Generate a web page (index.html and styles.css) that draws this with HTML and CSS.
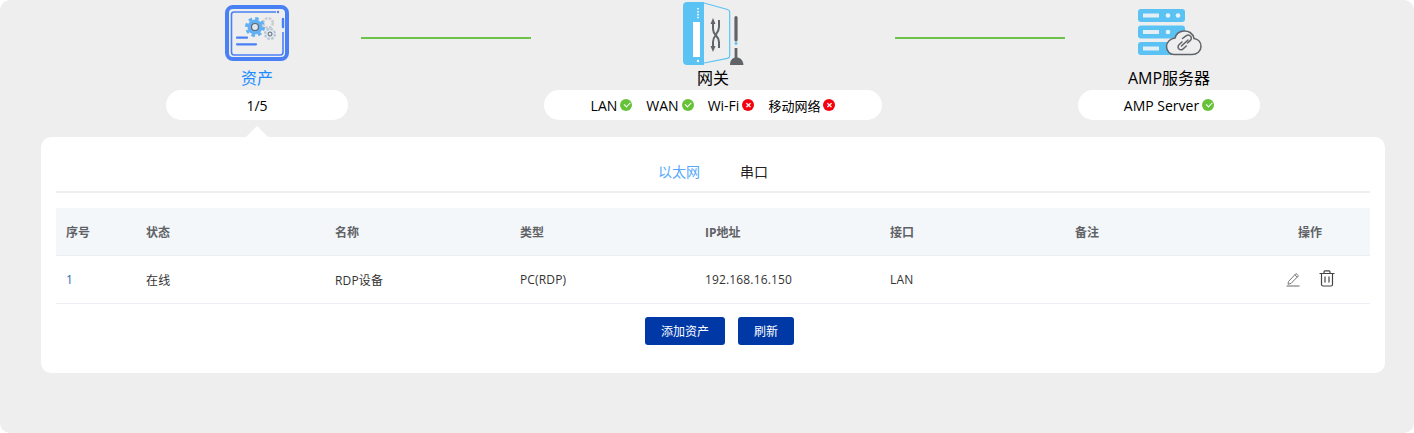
FILE: index.html
```html
<!DOCTYPE html>
<html>
<head>
  <meta charset="UTF-8">
  <meta name="viewport" content="width=device-width, initial-scale=1.0">
  <link rel="stylesheet" href="styles.css">
  <title>资产</title>
</head>
<body>
  <div class="page">
    <div class="topo">
      <div class="node node-asset">
        <svg class="node-icon" width="66" height="66" viewBox="0 0 66 66">
          <rect x="3" y="7" width="60" height="52" rx="6" fill="none" stroke="#4a80f5" stroke-width="4"/>
          <path d="M52 12H10C8.500 12 7.500 13 7.500 14.500V52C7.500 54 8.500 55 10 55H56.500C58 55 59 54 59 52V32" fill="none" stroke="#4a80f5" stroke-width="1.600"/>
          <circle cx="54" cy="12" r="1.200" fill="#4a80f5"/>
          <path d="M59 19V27" stroke="#4a80f5" stroke-width="2.400" stroke-linecap="round"/>
          <circle cx="44" cy="23" r="4.800" fill="none" stroke="#c8ccd0" stroke-width="2.600" stroke-dasharray="2.500 1.300"/>
          <circle cx="46" cy="34" r="5" fill="#dfe8f0" stroke="#b8c6d4" stroke-width="2.200" stroke-dasharray="2.500 1.400"/>
          <circle cx="46" cy="34" r="2" fill="none" stroke="#5f6670" stroke-width="1"/>
          <circle cx="31" cy="27" r="7.500" fill="#64b0f4"/>
          <circle cx="31" cy="27" r="8.500" fill="none" stroke="#64b0f4" stroke-width="3" stroke-dasharray="3.500 3.170"/>
          <circle cx="31" cy="27" r="3.500" fill="#dfe6ee" stroke="#5f6670" stroke-width="1.200"/>
          <path d="M13 37.700H23M13 44.300H32" stroke="#4a80f5" stroke-width="2.200" stroke-linecap="round"/>
        </svg>
        <div class="node-name is-active">资产</div>
        <div class="pill pill-small"><span>1/5</span></div>
      </div>

      <div class="link"></div>

      <div class="node node-gateway">
        <svg class="node-icon" width="66" height="66" viewBox="0 0 66 66">
          <path d="M7 2H24V65H7C4.500 65 3 63.500 3 61V6C3 3.500 4.500 2 7 2Z" fill="#5bc3f3"/>
          <path d="M24 3L47.500 9.500C49 10 49.700 10.500 49.700 12V56C49.700 57.500 49 58 47.500 58.300L24 63" fill="none" stroke="#5bc3f3" stroke-width="1.200"/>
          <rect x="13" y="22" width="7" height="35" fill="#fff"/>
          <path d="M18 8V19.500" stroke="#fff" stroke-width="1.600" stroke-dasharray="1.600 1.300"/>
          <circle cx="18" cy="61" r="1.200" fill="#fff"/>
          <path d="M33 22V29C33 36 39 35 39 42V48M39 20V27C39 34 33 35 33 42V48" fill="none" stroke="#606368" stroke-width="2"/>
          <path d="M33 18L30.500 24H35.500ZM33 52L30.500 46H35.500Z" fill="#606368"/>
          <path d="M56 17.500V40" stroke="#606368" stroke-width="3.200" stroke-linecap="round"/>
          <circle cx="56" cy="43.500" r="1.400" fill="#5bc3f3"/>
          <path d="M56 48V58" stroke="#606368" stroke-width="2.800"/>
          <path d="M50 65C50 60 52.500 57.500 56.500 57.500C60.500 57.500 63 60 63.500 65Z" fill="#606368"/>
        </svg>
        <div class="node-name">网关</div>
        <div class="pill pill-wide">
          <span>LAN<i class="dot ok"></i></span>
          <span>WAN<i class="dot ok"></i></span>
          <span>Wi-Fi<i class="dot bad"></i></span>
          <span class="pill-cn">移动网络<i class="dot bad"></i></span>
        </div>
      </div>

      <div class="link"></div>

      <div class="node node-server">
        <svg class="node-icon" width="66" height="66" viewBox="0 0 66 66">
          <rect x="2" y="9" width="47" height="13" rx="3" fill="#5bc3f3"/>
          <rect x="2" y="25.500" width="47" height="13" rx="3" fill="#5bc3f3"/>
          <rect x="2" y="42" width="47" height="13" rx="3" fill="#5bc3f3"/>
          <path d="M7 15.500H23M7 32H23M7 48.500H23" stroke="#e4eef5" stroke-width="4"/>
          <circle cx="32" cy="15.500" r="2.300" fill="#e8f4fb"/>
          <circle cx="42" cy="15.500" r="2.300" fill="#e8f4fb"/>
          <circle cx="32" cy="32" r="2.300" fill="#e8f4fb"/>
          <path d="M38 54.500H56C61 54.500 65 51 65 46.500C65 42 62 39 58 38.500C57 33 52 30.500 47.500 31C43 31.500 40 34 39 38C34.500 38.500 30.500 42 30.500 46.500C30.500 51 34 54.500 38 54.500Z" fill="#eee" stroke="#606368" stroke-width="1.500"/>
          <path d="M46.500 38.500L50 35.800C51.500 34.800 53.500 35 54.600 36.300C55.700 37.600 55.500 39.500 54.200 40.600L51.500 43M46 42L43 44.800C41.800 46 41.800 48 43 49C44.200 50.200 46.200 50 47.300 48.800L50.300 46M45.500 46L52 40" fill="none" stroke="#606368" stroke-width="1.500" stroke-linecap="round"/>
        </svg>
        <div class="node-name">AMP服务器</div>
        <div class="pill pill-small"><span>AMP Server<i class="dot ok"></i></span></div>
      </div>
    </div>

    <div class="card">
      <div class="tabs">
        <div class="tab is-active">以太网</div>
        <div class="tab">串口</div>
      </div>

      <table class="grid">
        <colgroup>
          <col class="col-no">
          <col class="col-state">
          <col><col><col><col><col>
          <col class="col-op">
        </colgroup>
        <thead>
          <tr>
            <th>序号</th>
            <th>状态</th>
            <th>名称</th>
            <th>类型</th>
            <th>IP地址</th>
            <th>接口</th>
            <th>备注</th>
            <th class="center">操作</th>
          </tr>
        </thead>
        <tbody>
          <tr>
            <td class="num">1</td>
            <td>在线</td>
            <td>RDP设备</td>
            <td>PC(RDP)</td>
            <td>192.168.16.150</td>
            <td>LAN</td>
            <td></td>
            <td class="center">
              <div class="ops">
                <svg width="16" height="16" viewBox="0 0 16 16">
                  <path d="M3.500 10.500L11 2.500L13.500 4.800L6 12.500L3 13.200ZM9.800 3.800L12.300 6.200" fill="none" stroke="#777" stroke-width="1"/>
                  <path d="M1.500 15H14.500" stroke="#666" stroke-width="1"/>
                </svg>
                <svg width="16" height="17" viewBox="0 0 16 17">
                  <path d="M.5 3.500H15.500M5 3.500V2C5 1.200 5.500 .8 6 .8H10C10.500 .8 11 1.200 11 2V3.500M2.500 3.500V14.500C2.500 15.500 3 16 4 16H12C13 16 13.500 15.500 13.500 14.500V3.500M6 6.500V12.500M10 6.500V12.500" fill="none" stroke="#444" stroke-width="1.200"/>
                </svg>
              </div>
            </td>
          </tr>
        </tbody>
      </table>

      <div class="actions">
        <button class="btn btn-add">添加资产</button>
        <button class="btn btn-refresh">刷新</button>
      </div>
    </div>
  </div>
</body>
</html>
```

FILE: styles.css
```css
html {
  background-color: #fff;
}

html, body {
  margin: 0;
  padding: 0;
}

body {
  font-family: "Open Sans", "Noto Sans CJK SC", sans-serif;
  background-color: #eee;
  border-radius: 10px;
  color: #000;
  height: 433px;
  overflow: hidden;
}

.page {
  padding: 0 29px 0 41px;
}

.topo {
  display: flex;
  justify-content: center;
  height: 137px;
  position: relative;
}

.node {
  display: flex;
  flex-direction: column;
  align-items: center;
  position: relative;
}

.node-asset::after {
  content: "";
  position: absolute;
  left: 80px;
  top: 126px;
  border-left: 11px solid transparent;
  border-right: 11px solid transparent;
  border-bottom: 11px solid #fff;
}

.node-icon {
  display: block;
  height: 66px;
}

.node-name {
  font-size: 16px;
  line-height: 24px;
}

.node-name.is-active {
  color: #1a8cff;
}

.pill {
  display: flex;
  align-items: center;
  justify-content: center;
  height: 30px;
  background-color: #fff;
  border-radius: 15px;
  font-size: 14px;
}

.pill-small {
  width: 182px;
}

.pill-wide {
  width: 338px;
  gap: 14px;
}

.pill span {
  display: flex;
  align-items: center;
}

.pill .pill-cn {
  font-size: 13px;
}

.dot {
  display: inline-block;
  width: 12px;
  height: 12px;
  border-radius: 50%;
  margin-left: 3px;
  position: relative;
}

.dot.ok {
  background-color: #67c23a;
}

.dot.ok::after {
  content: "";
  position: absolute;
  left: 3.500px;
  top: 3px;
  width: 5px;
  height: 2.500px;
  border-left: 1.300px solid #fff;
  border-bottom: 1.300px solid #fff;
  transform: rotate(-45deg);
}

.dot.bad {
  background-color: #f5000f;
}

.dot.bad::after {
  content: "×";
  position: absolute;
  left: 0;
  right: 0;
  top: 0;
  text-align: center;
  color: #fff;
  font-size: 11px;
  font-weight: 700;
  line-height: 12px;
}

.link {
  width: 170px;
  height: 2px;
  margin: 37px 13px 0;
  background-color: #6cc24a;
}

.card {
  width: 1314px;
  height: 236px;
  padding: 0 15px;
  background-color: #fff;
  border-radius: 10px;
}

.tabs {
  display: flex;
  justify-content: center;
  gap: 40px;
  height: 54px;
  line-height: 69px;
  border-bottom: 2px solid #eee;
  font-size: 14px;
  margin-bottom: 15px;
}

.tab {
  color: #222;
}

.tab.is-active {
  color: #55a8fd;
}

.grid {
  width: 1314px;
  table-layout: fixed;
  border-collapse: collapse;
  font-size: 12px;
}

.col-no {
  width: 80px;
}

.col-state {
  width: 189px;
}

.col-op {
  width: 120px;
}

.grid th {
  height: 47px;
  padding: 0 10px;
  text-align: left;
  color: #606266;
  font-weight: 700;
  background-color: #f4f7fa;
  border-bottom: 1px solid #ebeef5;
}

.grid td {
  height: 47px;
  padding: 0 10px;
  color: #333;
  letter-spacing: .15px;
  border-bottom: 1px solid #ebeef5;
}

.grid .center {
  text-align: center;
}

.grid .num {
  color: #2a6db0;
}

.ops {
  display: flex;
  justify-content: center;
  align-items: center;
  gap: 18px;
  margin-bottom: 2px;
}

.actions {
  display: flex;
  justify-content: center;
  gap: 13px;
  margin-top: 13px;
  padding-left: 13px;
}

.btn {
  height: 28px;
  border: none;
  border-radius: 3px;
  background-color: #0039a6;
  color: #fff;
  font-family: inherit;
  font-size: 12px;
  padding: 0;
}

.btn-add {
  width: 80px;
}

.btn-refresh {
  width: 56px;
}
```
